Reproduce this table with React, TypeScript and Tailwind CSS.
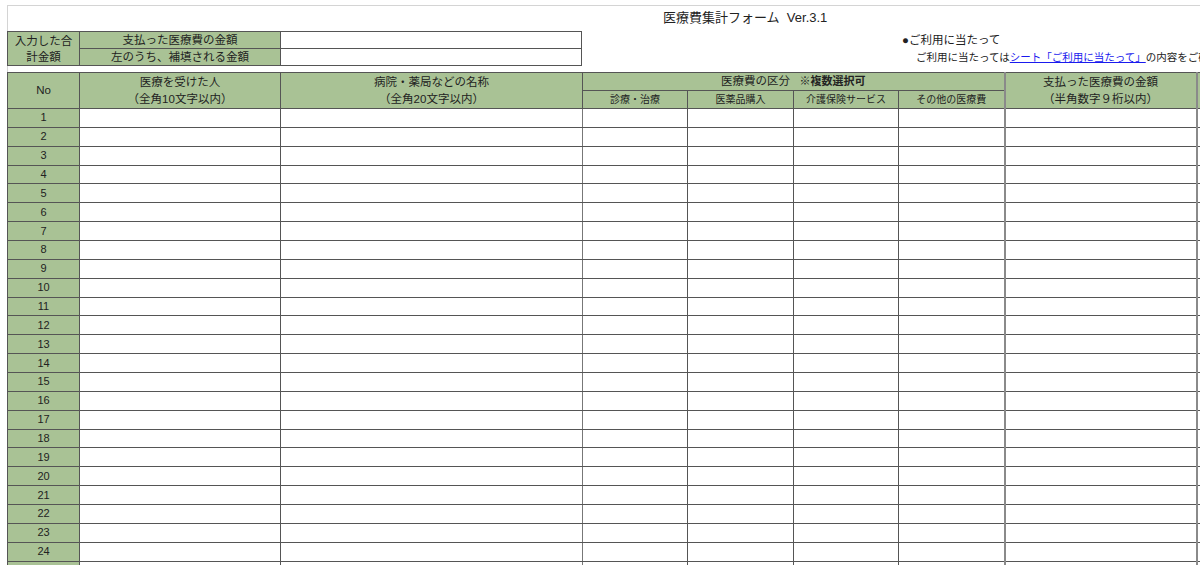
const font = "font-['Liberation_Sans','Noto_Sans_CJK_JP',sans-serif]";

const rows = Array.from({ length: 25 }, (_, i) => i + 1);

// column widths, taken from the sheet
const widths = [72, 201, 302, 105, 106, 105, 106, 192, 120];

const green = "bg-[#a9c295]";
const line = "border border-[#555]";

function SummaryBox() {
  return (
    <table className="-ml-px w-[574px] shrink-0 table-fixed border-collapse text-[11.5px] text-[#222]">
      <colgroup>
        <col className="w-[72px]" />
        <col className="w-[201px]" />
        <col className="w-[301px]" />
      </colgroup>
      <tbody>
        <tr className="h-[17px]">
          <td rowSpan={2} className={`${line} ${green} text-center leading-[16px] p-0`}>
            入力した合
            <br />
            計金額
          </td>
          <td className={`${line} ${green} text-center leading-[15px] p-0`}>支払った医療費の金額</td>
          <td className={`${line} bg-white p-0`} />
        </tr>
        <tr className="h-[17px]">
          <td className={`${line} ${green} text-center leading-[15px] p-0`}>左のうち、補填される金額</td>
          <td className={`${line} bg-white p-0`} />
        </tr>
      </tbody>
    </table>
  );
}

function Notice() {
  return (
    <div className="ml-[320px] pt-[1px] leading-[17px] text-[#222] whitespace-nowrap">
      <p className="text-[11.5px]">●ご利用に当たって</p>
      <p className="pl-[14px] text-[10.5px]">
        ご利用に当たっては
        <span className="text-[#1a1aee] underline">シート「ご利用に当たって」</span>
        の内容をご確認ください。
      </p>
    </div>
  );
}

function MainTable() {
  return (
    <table className="-ml-px w-[1309px] table-fixed border-collapse text-[#222]">
      <colgroup>
        {widths.map((w, i) => (
          <col key={i} style={{ width: w }} />
        ))}
      </colgroup>
      <thead>
        <tr className="h-[18px] text-[11.5px]">
          <th rowSpan={2} className={`${line} ${green} font-normal p-0`}>No</th>
          <th rowSpan={2} className={`${line} ${green} font-normal p-0 leading-[17px]`}>
            医療を受けた人
            <br />
            （全角10文字以内）
          </th>
          <th rowSpan={2} className={`${line} ${green} font-normal p-0 leading-[17px]`}>
            病院・薬局などの名称
            <br />
            （全角20文字以内）
          </th>
          <th colSpan={4} className={`${line} ${green} font-normal p-0 leading-[15px]`}>
            医療費の区分&nbsp;&nbsp;&nbsp;<span className="text-[11px] font-bold">※複数選択可</span>
          </th>
          <th rowSpan={2} className={`border-y border-x-2 border-y-[#555] border-x-[#8a8a8a] ${green} font-normal p-0 leading-[17px]`}>
            支払った医療費の金額
            <br />
            （半角数字９桁以内）
          </th>
          <th rowSpan={2} className={`${line} ${green} p-0`} />
        </tr>
        <tr className="h-[18px] text-[10px]">
          <th className={`${line} ${green} font-normal p-0 leading-[15px]`}>診療・治療</th>
          <th className={`${line} ${green} font-normal p-0 leading-[15px]`}>医薬品購入</th>
          <th className={`${line} ${green} font-normal p-0 leading-[15px]`}>介護保険サービス</th>
          <th className={`${line} ${green} font-normal p-0 leading-[15px]`}>その他の医療費</th>
        </tr>
      </thead>
      <tbody>
        {rows.map((n) => (
          <tr key={n} className="h-[18.87px]">
            <td className={`${line} ${green} text-center text-[11px] leading-[13px] p-0`}>{n}</td>
            <td className={`${line} p-0`} />
            <td className={`${line} border-x-[#777] p-0`} />
            <td className={`${line} p-0`} />
            <td className={`${line} p-0`} />
            <td className={`${line} p-0`} />
            <td className={`${line} p-0`} />
            <td className={`border-y border-x-2 border-y-[#555] border-x-[#8a8a8a] p-0`} />
            <td className={`${line} p-0`} />
          </tr>
        ))}
      </tbody>
    </table>
  );
}

export default function App() {
  return (
    <div className={`${font} h-[565px] w-[1200px] overflow-hidden bg-white pl-[7px] pt-[5px]`}>
      <div className="w-[1310px] border-l border-t border-[#d4d4d4]">
        {/* title */}
        <div className="h-[25px] pl-[655px] pt-[3px] text-[13px] leading-[18px] text-[#222]">
          医療費集計フォーム&nbsp;&nbsp;Ver.3.1
        </div>

        {/* totals + notice */}
        <div className="flex items-start">
          <SummaryBox />
          <Notice />
        </div>

        <div className="h-[6px]" />

        <MainTable />
      </div>
    </div>
  );
}
